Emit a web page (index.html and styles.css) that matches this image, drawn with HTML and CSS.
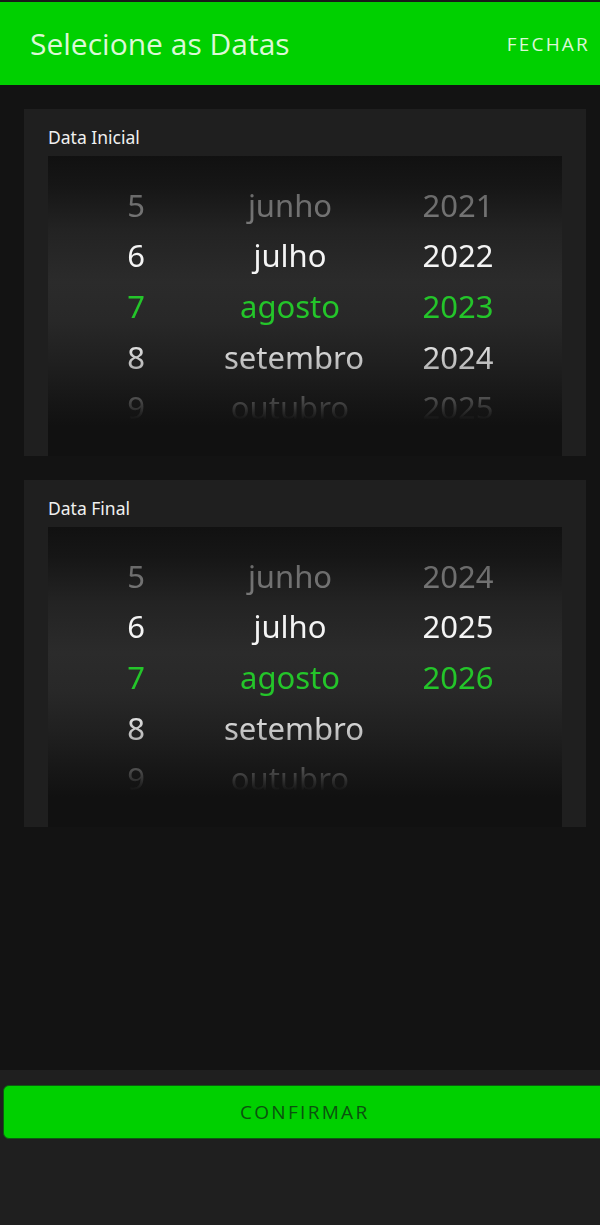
FILE: index.html
```html
<!DOCTYPE html>
<html lang="pt">
<head>
<meta charset="utf-8">
<title>Selecione as Datas</title>
<link rel="stylesheet" href="styles.css">
</head>
<body>
<div class="app">
  <header class="header">
    <h1 class="title">Selecione as Datas</h1>
    <span class="close">FECHAR</span>
  </header>
  <main class="main">
    <section class="card">
      <div class="label">Data Inicial</div>
      <div class="picker">
        <div class="wheel">
          <div class="row r-far"><span>5</span><span>junho</span><span>2021</span></div>
          <div class="row r-near"><span>6</span><span>julho</span><span>2022</span></div>
          <div class="row r-sel"><span>7</span><span>agosto</span><span>2023</span></div>
          <div class="row r-near2"><span>8</span><span>setembro</span><span>2024</span></div>
          <div class="row r-edge"><span>9</span><span>outubro</span><span>2025</span></div>
        </div>
      </div>
    </section>
    <section class="card">
      <div class="label">Data Final</div>
      <div class="picker">
        <div class="wheel">
          <div class="row r-far"><span>5</span><span>junho</span><span>2024</span></div>
          <div class="row r-near"><span>6</span><span>julho</span><span>2025</span></div>
          <div class="row r-sel"><span>7</span><span>agosto</span><span>2026</span></div>
          <div class="row r-near2"><span>8</span><span>setembro</span><span></span></div>
          <div class="row r-edge"><span>9</span><span>outubro</span><span></span></div>
        </div>
      </div>
    </section>
  </main>
  <footer class="footer">
    <button class="confirm">CONFIRMAR</button>
  </footer>
</div>
</body>
</html>
```
FILE: styles.css
```css
* { box-sizing: border-box; }
html, body { margin: 0; padding: 0; }
body {
  background: #131313;
  font-family: "Noto Sans", "Open Sans", sans-serif;
  width: 600px;
  height: 1225px;
  overflow: hidden;
}
.app {
  display: flex;
  flex-direction: column;
  height: 1225px;
}
.header {
  height: 85px;
  border-top: 2px solid #1a1a1a;
  background: #00d000;
  display: flex;
  align-items: center;
  justify-content: space-between;
  padding: 0 10px 0 30px;
  flex: none;
}
.title {
  margin: 0;
  font-family: "Open Sans", sans-serif;
  font-weight: 400;
  font-size: 30px;
  color: #dcf8d6;
}
.close {
  font-family: "Open Sans", sans-serif;
  font-size: 19px;
  color: #dcf8d6;
  letter-spacing: 2.2px;
}
.main {
  flex: 1;
  display: flex;
  flex-direction: column;
  gap: 24px;
  padding: 24px 14px 0 24px;
}
.card {
  background: #1f1f1f;
  padding: 0 24px;
}
.label {
  height: 47px;
  display: flex;
  align-items: center;
  padding-top: 9px;
  color: #f0f0f0;
  font-size: 17.5px;
}
.picker {
  height: 300px;
  background: linear-gradient(to bottom,
    #111111 0%, #161616 10%, #232323 25%, #2b2b2b 42%, #282828 55%,
    #202020 68%, #161616 82%, #111111 90%, #111111 100%);
}
.wheel {
  height: 264px;
  padding-top: 24px;
  overflow: hidden;
  -webkit-mask-image: linear-gradient(to bottom, rgba(0,0,0,0.65) 0%, #000 35%, #000 72%, rgba(0,0,0,0.45) 92%, rgba(0,0,0,0) 100%);
  mask-image: linear-gradient(to bottom, rgba(0,0,0,0.65) 0%, #000 35%, #000 72%, rgba(0,0,0,0.45) 92%, rgba(0,0,0,0) 100%);
}
.row {
  display: grid;
  grid-template-columns: 176px 132px 204px;
  height: 50.6px;
  align-items: center;
  font-size: 31px;
  line-height: 1;
}
.row span {
  text-align: center;
  white-space: nowrap;
}
.r-far { color: #808080; }
.r-near { color: #f4f4f4; }
.r-sel { color: #24c52a; }
.r-near2 { color: #e2e2e2; }
.r-edge { color: #909090; }
.footer {
  height: 155px;
  flex: none;
  background: #1f1f1f;
  padding-top: 15px;
  padding-left: 3px;
  overflow: hidden;
}
.confirm {
  display: block;
  width: 610px;
  height: 54px;
  border: 1px solid #0c5c10;
  border-radius: 6px;
  background: #00d000;
  color: #0b520f;
  font-family: "Open Sans", sans-serif;
  font-size: 19px;
  letter-spacing: 2.3px;
  text-align: left;
  padding: 0 0 0 236px;
}
```
